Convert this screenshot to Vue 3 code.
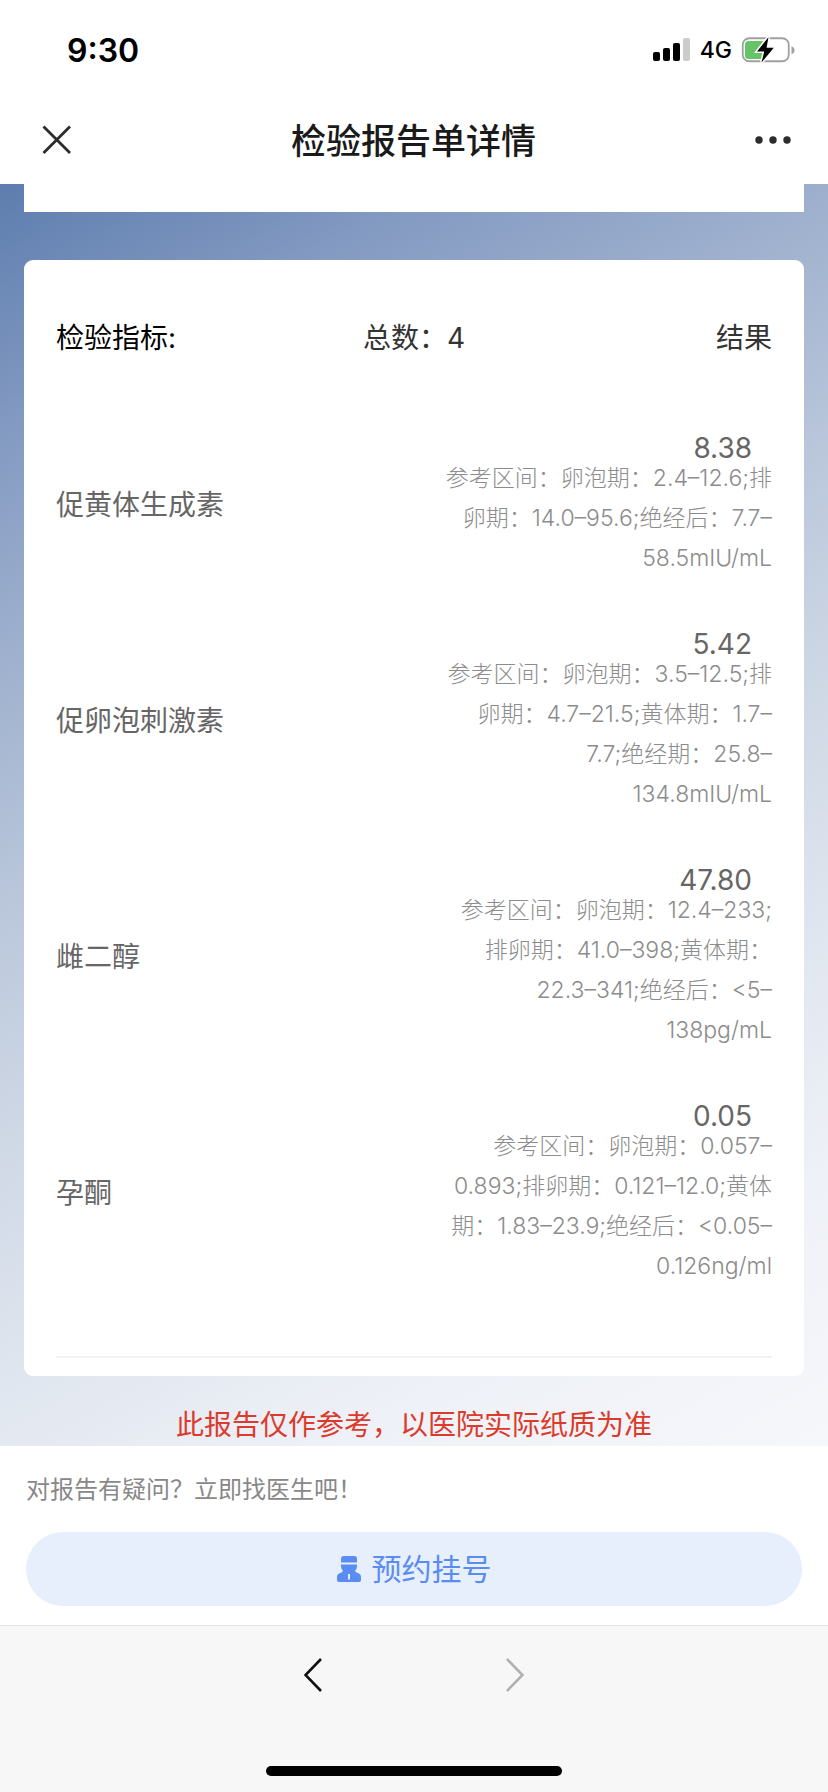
<template>
    <div class="page">
        <div class="status-bar">
            <span class="time">9:30</span>
            <div class="status-icons">
                <svg class="signal" viewBox="0 0 38 24" aria-hidden="true">
                    <rect x="0" y="14" width="7" height="9" rx="2" />
                    <rect x="10" y="10" width="7" height="13" rx="2" />
                    <rect x="20" y="5" width="7" height="18" rx="2" />
                    <rect x="30" y="0" width="7" height="23" rx="2" fill="#cccccc" />
                </svg>
                <span class="network">4G</span>
                <svg class="battery" viewBox="0 0 54 28" aria-hidden="true">
                    <rect x="1.75" y="2.25" width="46" height="23" rx="6.5" fill="none" stroke="#a0a0a0" stroke-width="1.8" />
                    <path d="M50.5 10.2q3 1.2 3 4t-3 4z" fill="#a0a0a0" />
                    <rect x="4" y="5" width="20" height="18" rx="3.5" fill="#65c466" />
                    <path d="M27.5 1 16 15.6h7.2L20.5 26.6 32.8 11.8h-7.2z" fill="#000" stroke="#fff" stroke-width="3" paint-order="stroke" />
                </svg>
            </div>
        </div>

        <header class="nav-bar">
            <button type="button" class="icon-btn" aria-label="关闭">
                <svg width="30" height="30" viewBox="0 0 30 30">
                    <path d="M1.5 1.5 28 28M28 1.5 1.5 28" stroke="#2c2c2c" stroke-width="2.8" />
                </svg>
            </button>
            <h1>检验报告单详情</h1>
            <button type="button" class="icon-btn" aria-label="更多">
                <svg width="36" height="8" viewBox="0 0 36 8">
                    <circle cx="4" cy="4" r="3.7" />
                    <circle cx="18" cy="4" r="3.7" />
                    <circle cx="32" cy="4" r="3.7" />
                </svg>
            </button>
        </header>

        <main class="report">
            <div class="prev-card"></div>
            <section class="card">
                <table>
                    <thead>
                        <tr>
                            <th class="head-name">检验指标:</th>
                            <th class="head-total">总数：{{ items.length }}</th>
                            <th class="head-result">结果</th>
                        </tr>
                    </thead>
                    <tbody>
                        <tr v-for="item in items" :key="item.name">
                            <td class="name">{{ item.name }}</td>
                            <td class="result" colspan="2">
                                <div class="value">{{ item.value }}</div>
                                <div v-for="line in item.range" :key="line" class="range">{{ line }}</div>
                            </td>
                        </tr>
                    </tbody>
                </table>
                <hr>
            </section>
            <p class="notice">此报告仅作参考，以医院实际纸质为准</p>
        </main>

        <section class="ask">
            <p>对报告有疑问？立即找医生吧！</p>
            <button type="button" class="book-btn">
                <svg width="24" height="26" viewBox="0 0 24 26" aria-hidden="true">
                    <path d="M4 6.6V3Q4 0 7 0h10q3 0 3 3v3.6z" />
                    <path fill-rule="evenodd" d="M4 8.6h16v2q0 2-2 4.400 1 1.400 2.800 2Q24 18 24 21v3q0 2-2 2H2q-2 0-2-2v-3q0-3 3.200-4Q5 16.400 6 15 4 12.600 4 10.600zM11 18v5.600h2V18z" />
                </svg>
                <span>预约挂号</span>
            </button>
        </section>

        <footer class="toolbar">
            <nav class="history">
                <button type="button" class="icon-btn" aria-label="后退">
                    <svg width="18" height="34" viewBox="0 0 18 34">
                        <path d="M17 1 1.500 17 17 33" fill="none" stroke="#111" stroke-width="2.600" />
                    </svg>
                </button>
                <button type="button" class="icon-btn" aria-label="前进" disabled>
                    <svg width="18" height="34" viewBox="0 0 18 34">
                        <path d="M1 1 16.500 17 1 33" fill="none" stroke="#b0b0b0" stroke-width="2.600" />
                    </svg>
                </button>
            </nav>
            <div class="home-indicator"></div>
        </footer>
    </div>
</template>

<script setup>
import { ref } from 'vue';

const items = ref([
    {
        name: '促黄体生成素',
        value: '8.38',
        range: ['参考区间：卵泡期：2.4–12.6;排', '卵期：14.0–95.6;绝经后：7.7–', '58.5mIU/mL'],
    },
    {
        name: '促卵泡刺激素',
        value: '5.42',
        range: ['参考区间：卵泡期：3.5–12.5;排', '卵期：4.7–21.5;黄体期：1.7–', '7.7;绝经期：25.8–', '134.8mIU/mL'],
    },
    {
        name: '雌二醇',
        value: '47.80',
        range: ['参考区间：卵泡期：12.4–233;', '排卵期：41.0–398;黄体期：', '22.3–341;绝经后：<5–', '138pg/mL'],
    },
    {
        name: '孕酮',
        value: '0.05',
        range: ['参考区间：卵泡期：0.057–', '0.893;排卵期：0.121–12.0;黄体', '期：1.83–23.9;绝经后：<0.05–', '0.126ng/ml'],
    },
]);
</script>

<style>
body {
    margin: 0;
}
</style>

<style scoped>
.page {
    display: flex;
    flex-direction: column;
    min-height: 100vh;
    background-color: #fff;
    font-family: Inter, "Noto Sans CJK SC", sans-serif;
    font-size: 28px;
    color: #333;
}

p,
h1 {
    margin: 0;
}

svg {
    display: block;
}

button {
    font-family: inherit;
    border: none;
    cursor: pointer;
}

.icon-btn {
    padding: 0;
    background: none;
}

.status-bar {
    display: flex;
    justify-content: space-between;
    align-items: center;
    height: 100px;
    padding: 0 33px 0 67px;
    color: #000;
}

.time {
    font-size: 32px;
    font-weight: 600;
}

.status-icons {
    display: flex;
    align-items: center;
    gap: 9px;
}

.signal {
    width: 38px;
    height: 24px;
}

.battery {
    width: 54px;
    height: 28px;
}

.network {
    font-size: 23px;
    font-weight: 500;
}

.nav-bar {
    display: flex;
    justify-content: space-between;
    align-items: center;
    height: 84px;
    padding: 0 37px 4px 42px;
    box-sizing: border-box;
}

.nav-bar h1 {
    padding-bottom: 4px;
    font-size: 35px;
    font-weight: 500;
    color: #1a1a1a;
}

.nav-bar circle {
    fill: #2c2c2c;
}

.report {
    padding: 0 24px;
    background: linear-gradient(151deg, #5d7dae, #8299c1 14%, #9fb1ce 28%, #bac7db 42%, #cfd8e5 56%, #e0e6ef 70%, #eef1f7 84%, #f6f7fb);
}

.prev-card {
    height: 28px;
    margin-bottom: 48px;
    background-color: #fff;
}

.card {
    padding: 7px 32px 18px;
    border-radius: 9px;
    background-color: #fff;
}

table {
    width: 100%;
    table-layout: fixed;
    border-collapse: collapse;
}

th,
td {
    padding: 0;
    font-weight: 400;
    text-align: left;
    white-space: nowrap;
}

th {
    height: 138px;
}

.head-name {
    color: #000;
}

.head-total {
    text-align: center;
}

.head-result {
    text-align: right;
}

.name {
    color: #666;
}

.result {
    padding: 33px 0 23px;
    text-align: right;
}

.value {
    margin-right: 20px;
    line-height: 20px;
    color: #666;
}

.range {
    font-size: 23px;
    font-weight: 300;
    line-height: 40px;
    color: #8c8c8c;
}

hr {
    height: 2px;
    margin: 47px 0 0;
    border: none;
    background-color: #f2f2f2;
}

.notice {
    padding: 29px 0 1px;
    line-height: 40px;
    text-align: center;
    color: #dc3a2b;
}

.ask {
    padding: 26px 26px 19px;
}

.ask p {
    font-size: 24px;
    line-height: 36px;
    color: #888;
}

.book-btn {
    display: flex;
    justify-content: center;
    align-items: center;
    gap: 11px;
    width: 100%;
    height: 74px;
    margin-top: 24px;
    padding: 0;
    border-radius: 37px;
    background-color: #e7effd;
    font-size: 30px;
    color: #5a8cf2;
}

.book-btn svg {
    fill: #5a8cf2;
}

.book-btn span {
    padding-bottom: 4px;
}

.toolbar {
    display: flex;
    flex-grow: 1;
    flex-direction: column;
    justify-content: space-between;
    align-items: center;
    padding: 32px 0 16px;
    border-top: 1px solid #e3e3e3;
    background-color: #f7f7f7;
}

.history {
    display: flex;
    gap: 184px;
}

.home-indicator {
    width: 296px;
    height: 10px;
    border-radius: 5px;
    background-color: #000;
}
</style>
